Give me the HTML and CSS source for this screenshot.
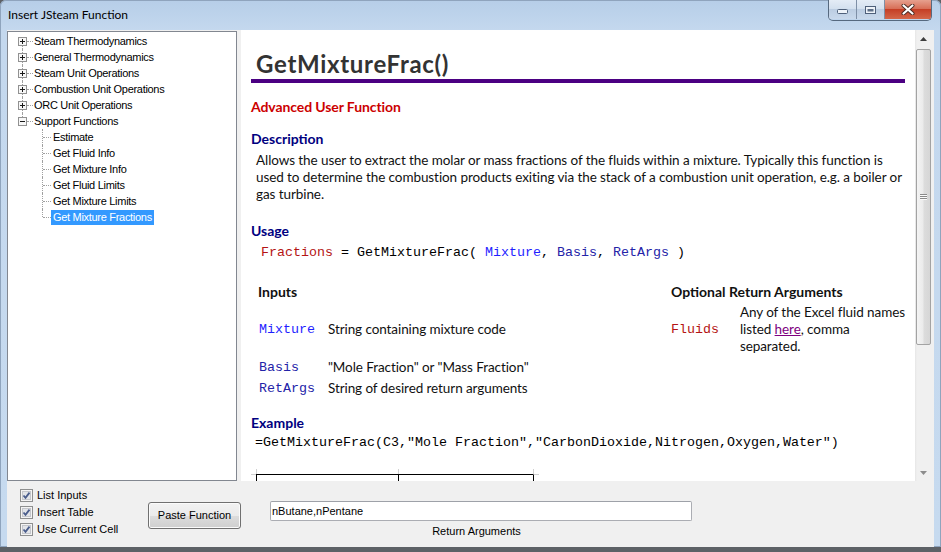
FILE: index.html
```html
<!DOCTYPE html>
<html lang="en">
<head>
<meta charset="UTF-8" />
<title>Insert JSteam Function</title>
<link rel="stylesheet" href="styles.css">
</head>
<body>
<div class="window">

  <!-- Title bar -->
  <div class="titlebar">
    <span class="title">Insert JSteam Function</span>
    <div class="caption">
      <span class="cap-btn min">
        <svg width="11" height="5" viewBox="0 0 11 5"><rect x="0.5" y="0.5" width="10" height="4" rx="1" fill="#eef3f9" stroke="#4f607a"/></svg>
      </span>
      <span class="cap-btn max">
        <svg width="11" height="8" viewBox="0 0 11 8"><rect x="0.5" y="0.5" width="10" height="7" fill="#eef3f9" stroke="#4f607a"/><rect x="2.5" y="3" width="6" height="2.5" fill="#5d6f88"/></svg>
      </span>
      <span class="cap-btn close">
        <svg width="14" height="11" viewBox="0 0 14 11"><path d="M2.5 1.5 L11.5 9.5 M11.5 1.5 L2.5 9.5" stroke="#4a2a22" stroke-width="4" stroke-linecap="round"/><path d="M2.5 1.5 L11.5 9.5 M11.5 1.5 L2.5 9.5" stroke="#fff" stroke-width="2.2" stroke-linecap="round"/></svg>
      </span>
    </div>
  </div>

  <div class="client">
    <div class="main">

      <!-- Function tree -->
      <div class="tree">
        <div class="node">
          <span class="rail"><i class="seg none"></i><svg class="box" width="9" height="9" viewBox="0 0 9 9"><rect x="0.5" y="0.5" width="8" height="8" fill="#f7f7f7" stroke="#919191"/><path d="M2 4.5h5M4.5 2v5" stroke="#1a1a1a"/></svg><i class="seg"></i></span>
          <span class="dash"></span><span class="label">Steam Thermodynamics</span>
        </div>
        <div class="node">
          <span class="rail"><i class="seg"></i><svg class="box" width="9" height="9" viewBox="0 0 9 9"><rect x="0.5" y="0.5" width="8" height="8" fill="#f7f7f7" stroke="#919191"/><path d="M2 4.5h5M4.5 2v5" stroke="#1a1a1a"/></svg><i class="seg"></i></span>
          <span class="dash"></span><span class="label">General Thermodynamics</span>
        </div>
        <div class="node">
          <span class="rail"><i class="seg"></i><svg class="box" width="9" height="9" viewBox="0 0 9 9"><rect x="0.5" y="0.5" width="8" height="8" fill="#f7f7f7" stroke="#919191"/><path d="M2 4.5h5M4.5 2v5" stroke="#1a1a1a"/></svg><i class="seg"></i></span>
          <span class="dash"></span><span class="label">Steam Unit Operations</span>
        </div>
        <div class="node">
          <span class="rail"><i class="seg"></i><svg class="box" width="9" height="9" viewBox="0 0 9 9"><rect x="0.5" y="0.5" width="8" height="8" fill="#f7f7f7" stroke="#919191"/><path d="M2 4.5h5M4.5 2v5" stroke="#1a1a1a"/></svg><i class="seg"></i></span>
          <span class="dash"></span><span class="label">Combustion Unit Operations</span>
        </div>
        <div class="node">
          <span class="rail"><i class="seg"></i><svg class="box" width="9" height="9" viewBox="0 0 9 9"><rect x="0.5" y="0.5" width="8" height="8" fill="#f7f7f7" stroke="#919191"/><path d="M2 4.5h5M4.5 2v5" stroke="#1a1a1a"/></svg><i class="seg"></i></span>
          <span class="dash"></span><span class="label">ORC Unit Operations</span>
        </div>
        <div class="node">
          <span class="rail"><i class="seg"></i><svg class="box" width="9" height="9" viewBox="0 0 9 9"><rect x="0.5" y="0.5" width="8" height="8" fill="#f7f7f7" stroke="#919191"/><path d="M2 4.5h5" stroke="#1a1a1a"/></svg><i class="seg none"></i></span>
          <span class="dash"></span><span class="label">Support Functions</span>
        </div>
        <div class="node child"><span class="crail"></span><span class="cdash"></span><span class="label">Estimate</span></div>
        <div class="node child"><span class="crail"></span><span class="cdash"></span><span class="label">Get Fluid Info</span></div>
        <div class="node child"><span class="crail"></span><span class="cdash"></span><span class="label">Get Mixture Info</span></div>
        <div class="node child"><span class="crail"></span><span class="cdash"></span><span class="label">Get Fluid Limits</span></div>
        <div class="node child"><span class="crail"></span><span class="cdash"></span><span class="label">Get Mixture Limits</span></div>
        <div class="node child"><span class="crail last"></span><span class="cdash"></span><span class="label selected">Get Mixture Fractions</span></div>
      </div>

      <!-- Help browser -->
      <div class="browser">
        <div class="doc">
          <h1>GetMixtureFrac()</h1>
          <p class="adv">Advanced User Function</p>

          <h3>Description</h3>
          <p class="desc">Allows the user to extract the molar or mass fractions of the fluids within a mixture. Typically this function is used to determine the combustion products exiting via the stack of a combustion unit operation, e.g. a boiler or gas turbine.</p>

          <h3 class="usage">Usage</h3>
          <pre class="code"><span class="ret">Fractions</span> = GetMixtureFrac( <span class="arg">Mixture</span>, <span class="arg2">Basis</span>, <span class="arg2">RetArgs</span> )</pre>

          <table class="args">
            <tr>
              <th colspan="2">Inputs</th>
              <th colspan="2">Optional Return Arguments</th>
            </tr>
            <tr>
              <td class="c1 mono arg">Mixture</td>
              <td class="c2">String containing mixture code</td>
              <td class="c3 mono ret">Fluids</td>
              <td class="c4">Any of the Excel fluid names<br>listed <a href="#">here</a>, comma<br>separated.</td>
            </tr>
            <tr>
              <td class="c1 mono arg2">Basis</td>
              <td class="c2">"Mole Fraction" or "Mass Fraction"</td>
              <td></td><td></td>
            </tr>
            <tr>
              <td class="c1 mono arg2">RetArgs</td>
              <td class="c2">String of desired return arguments</td>
              <td></td><td></td>
            </tr>
          </table>

          <h3 class="example">Example</h3>
          <pre class="code ex">=GetMixtureFrac(C3,"Mole Fraction","CarbonDioxide,Nitrogen,Oxygen,Water")</pre>

          <table class="sheet">
            <tr class="ticks"><td class="g"></td><td class="t w1"></td><td class="t w2"></td><td class="t g"></td></tr>
            <tr class="cells"><td class="g edge"></td><td class="cell"></td><td class="cell"></td><td class="cell g"></td></tr>
          </table>
        </div>

        <div class="vscroll">
          <div class="sbtn">
            <svg width="7" height="4" viewBox="0 0 7 4"><polygon points="0,4 7,4 3.5,0" fill="#3c3c3c"/></svg>
          </div>
          <div class="thumb">
            <svg width="7" height="6" viewBox="0 0 7 6"><path d="M0 0.5h7M0 2.5h7M0 4.5h7" stroke="#8a8a8a"/><path d="M0 1.5h7M0 3.5h7M0 5.5h7" stroke="#fbfbfb"/></svg>
          </div>
          <div class="sbtn down">
            <svg width="7" height="4" viewBox="0 0 7 4"><polygon points="0,0 7,0 3.5,4" fill="#8c8c8c"/></svg>
          </div>
        </div>
      </div>
    </div>

    <!-- Options row -->
    <div class="bottom">
      <div class="checks">
        <label class="check"><svg width="13" height="13" viewBox="0 0 13 13"><rect x="0.5" y="0.5" width="12" height="12" fill="#f4f4f4" stroke="#8e8f8f"/><rect x="2.5" y="2.5" width="8" height="8" fill="#e2e4e8" stroke="#c4c6cb"/><path d="M3.5 6.5 L5.5 8.8 L9.5 3.6" fill="none" stroke="#4a5d8c" stroke-width="1.8"/></svg>List Inputs</label>
        <label class="check"><svg width="13" height="13" viewBox="0 0 13 13"><rect x="0.5" y="0.5" width="12" height="12" fill="#f4f4f4" stroke="#8e8f8f"/><rect x="2.5" y="2.5" width="8" height="8" fill="#e2e4e8" stroke="#c4c6cb"/><path d="M3.5 6.5 L5.5 8.8 L9.5 3.6" fill="none" stroke="#4a5d8c" stroke-width="1.8"/></svg>Insert Table</label>
        <label class="check"><svg width="13" height="13" viewBox="0 0 13 13"><rect x="0.5" y="0.5" width="12" height="12" fill="#f4f4f4" stroke="#8e8f8f"/><rect x="2.5" y="2.5" width="8" height="8" fill="#e2e4e8" stroke="#c4c6cb"/><path d="M3.5 6.5 L5.5 8.8 L9.5 3.6" fill="none" stroke="#4a5d8c" stroke-width="1.8"/></svg>Use Current Cell</label>
      </div>
      <button class="paste">Paste Function</button>
      <div class="retargs">
        <input type="text" value="nButane,nPentane" />
        <div class="caption-label">Return Arguments</div>
      </div>
    </div>
  </div>
</div>
</body>
</html>
```

FILE: styles.css
```css
body {
  margin: 0;
  width: 941px;
  height: 552px;
  overflow: hidden;
  background: #5d6166;
  font-family: "Liberation Sans", Arial, sans-serif;
  font-size: 11px;
  color: #000;
}
.window {
  height: 547px;
  display: flex;
  flex-direction: column;
  background: linear-gradient(#b6cee8, #c4d8ee 30px, #c6daef);
  border-radius: 6px 6px 0 0;
  box-shadow: inset 0 0 0 1px #8fa4bd;
}
/* Title bar */
.titlebar {
  height: 30px;
  flex: none;
  display: flex;
  align-items: flex-start;
  padding: 0 9px 0 8px;
}
.title {
  font: 12px/16px Lato, sans-serif;
  margin-top: 7px;
}
.caption {
  margin-left: auto;
  display: flex;
  height: 20px;
  border: 1px solid #56697f;
  border-top: none;
  border-radius: 0 0 5px 5px;
  overflow: hidden;
}
.cap-btn {
  display: flex;
  align-items: center;
  justify-content: center;
  height: 19px;
}
.min, .max {
  width: 27px;
  background: linear-gradient(#e4ecf6, #d2dfee 50%, #bccde2 50%, #c9d9ec);
  border-right: 1px solid #7e8fa6;
}
.min svg { margin-top: 4px; }
.close {
  width: 46px;
  background: linear-gradient(#e6a08e, #d66a52 50%, #c53f26 50%, #d36649);
}
/* Client area */
.client {
  flex: 1;
  margin: 0 7px 0 7px;
  background: #f0f0f0;
  display: flex;
  flex-direction: column;
}
.main {
  display: flex;
  height: 451px;
  flex: none;
}
/* Tree */
.tree {
  width: 230px;
  height: 450px;
  margin-top: 1px;
  box-sizing: border-box;
  border: 1px solid #828790;
  background: #fff;
  padding-top: 1px;
  letter-spacing: -0.3px;
}
.node {
  display: flex;
  align-items: center;
  height: 16px;
  padding-left: 10px;
  white-space: nowrap;
}
.rail {
  width: 9px;
  height: 16px;
  display: flex;
  flex-direction: column;
  align-items: center;
}
.rail .seg {
  flex: 1;
  width: 0;
  border-left: 1px dotted #a0a0a0;
}
.rail .seg.none { border-color: transparent; }
.box { display: block; flex: none; }
.dash {
  width: 6px;
  border-top: 1px dotted #a0a0a0;
}
.label {
  padding-left: 1px;
  line-height: 16px;
}
.node.child { padding-left: 34px; }
.crail {
  width: 0;
  align-self: stretch;
  border-left: 1px dotted #a0a0a0;
}
.crail.last {
  align-self: flex-start;
  height: 8px;
}
.cdash {
  width: 8px;
  border-top: 1px dotted #a0a0a0;
}
.node.child .label { padding: 0 2px; }
.label.selected {
  background: #3399ff;
  color: #fff;
  line-height: 15px;
}
/* Browser */
.browser {
  margin-left: 4px;
  width: 691px;
  height: 451px;
  display: flex;
  background: #fff;
}
.doc {
  width: 674px;
  height: 451px;
  box-sizing: border-box;
  padding: 0 10px;
  overflow: hidden;
  font-family: Lato, sans-serif;
  font-size: 13.5px;
  line-height: 17px;
  letter-spacing: -0.08px;
  color: #111;
}
h1 {
  margin: 19px 0 0;
  padding-left: 5px;
  font-size: 24px;
  line-height: 30px;
  font-weight: bold;
  color: #333;
  letter-spacing: 0.7px;
  border-bottom: 4px solid #4b0082;
}
.adv {
  margin: 15px 0 0;
  font-size: 14px;
  font-weight: bold;
  color: #cc0000;
  letter-spacing: -0.1px;
}
h3 {
  margin: 15px 0 0;
  font-size: 14px;
  line-height: 17px;
  font-weight: bold;
  color: #000080;
  letter-spacing: 0;
}
h3.usage { margin-top: 19px; }
h3.example { margin-top: 15px; }
.desc {
  margin: 5px 0 0;
  padding-left: 5px;
}
.code {
  margin: 5px 0 0;
  padding-left: 10px;
  font-family: "Liberation Mono", "Courier New", monospace;
  font-size: 13.33px;
  line-height: 17px;
  letter-spacing: 0;
  color: #000;
}
.code.ex {
  margin-top: 3px;
  padding-left: 4px;
}
.ret { color: #b41414; }
.arg { color: #1f1fff; }
.arg2 { color: #2323a8; }
/* Arguments table */
.args {
  margin: 20px 0 0 7px;
  border-collapse: collapse;
}
.args th, .args td {
  padding: 2px 0;
  text-align: left;
  vertical-align: middle;
}
.args th {
  font-size: 14px;
  font-weight: bold;
  letter-spacing: 0;
}
.c1 { width: 69px; padding-left: 1px !important; }
.c2 { width: 344px; }
.c3 { width: 69px; }
.c4 { width: 164px; white-space: nowrap; }
.mono {
  font-family: "Liberation Mono", "Courier New", monospace;
  font-size: 13.33px;
  letter-spacing: 0;
}
.args a { color: #800080; }
/* Example sheet */
.sheet {
  margin-top: 18px;
  border-collapse: separate;
  border-spacing: 0;
}
.sheet td { padding: 0; }
.sheet .g { width: 5px; }
.sheet .ticks td { height: 5px; }
.sheet .t { border-left: 1px solid #d0d0d0; }
.sheet .w1 { width: 141px; }
.sheet .w2 { width: 134px; }
.sheet .cells td { height: 30px; }
.sheet .edge { border-top: 1px solid #d0d0d0; }
.sheet .cell {
  border-left: 1px solid #000;
  border-top: 1px solid #000;
}
.sheet .cell.g { border-top-color: #d0d0d0; }
/* Scrollbar */
.vscroll {
  width: 17px;
  display: flex;
  flex-direction: column;
  background: linear-gradient(to right, #e6e6e6, #f0f0f0 2px);
}
.sbtn {
  height: 17px;
  display: flex;
  align-items: center;
  justify-content: center;
}
.sbtn.down { margin-top: auto; }
.thumb {
  margin: 2px 1px 0;
  height: 296px;
  box-sizing: border-box;
  border: 1px solid #a3a3a3;
  border-radius: 2px;
  background: linear-gradient(to right, #f4f4f4, #ebebeb 45%, #dcdcdc 55%, #d6d6d6);
  display: flex;
  align-items: center;
  justify-content: center;
}
/* Bottom options */
.bottom {
  flex: 1;
  display: flex;
  align-items: flex-start;
}
.checks {
  width: 128px;
  margin: 8px 0 0 13px;
  display: flex;
  flex-direction: column;
}
.check {
  display: flex;
  align-items: center;
  gap: 4px;
  height: 13px;
  margin-bottom: 4px;
  line-height: 13px;
  white-space: nowrap;
}
.check svg { flex: none; }
.paste {
  margin-top: 21px;
  width: 93px;
  height: 27px;
  padding: 0 0 1px;
  font: 11px "Liberation Sans", Arial, sans-serif;
  color: #000;
  border: 1px solid #707070;
  border-radius: 3px;
  background: linear-gradient(#f2f2f2, #ebebeb 50%, #dddddd 50%, #cfcfcf);
  box-shadow: inset 0 0 0 1px #fbfbfb;
}
.retargs {
  margin: 20px 0 0 29px;
  width: 422px;
}
.retargs input {
  display: block;
  width: 422px;
  height: 20px;
  box-sizing: border-box;
  margin: 0;
  padding: 0 0 0 1px;
  font: 11px "Liberation Sans", Arial, sans-serif;
  color: #000;
  border: 1px solid #abadb3;
  border-top-color: #9ea1a8;
  border-radius: 2px;
  background: #fff;
  outline: none;
}
.caption-label {
  margin-top: 3px;
  padding-right: 9px;
  text-align: center;
  line-height: 14px;
}
```
